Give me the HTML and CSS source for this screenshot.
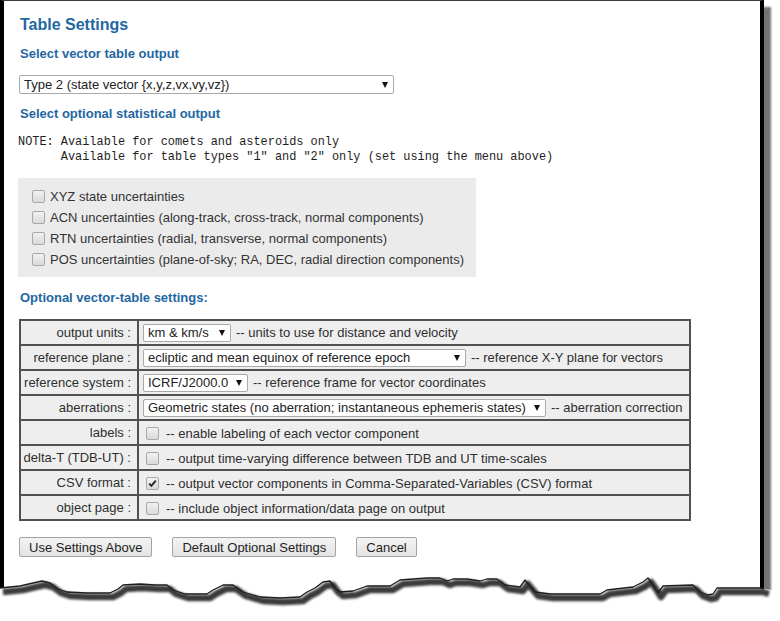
FILE: index.html
```html
<!DOCTYPE html>
<html>
<head>
<meta charset="utf-8">
<title>Table Settings</title>
<link rel="stylesheet" href="styles.css">
</head>
<body>
<div class="page">
  <h1 class="title">Table Settings</h1>
  <h3 class="section">Select vector table output</h3>
  <div class="select select-main"><span class="select-text">Type 2 (state vector {x,y,z,vx,vy,vz})</span><span class="arrow"></span></div>
  <h3 class="section">Select optional statistical output</h3>
  <pre class="note">NOTE: Available for comets and asteroids only
      Available for table types "1" and "2" only (set using the menu above)</pre>
  <div class="stat-box">
    <div class="check-row"><span class="cb"></span><span>XYZ state uncertainties</span></div>
    <div class="check-row"><span class="cb"></span><span>ACN uncertainties (along-track, cross-track, normal components)</span></div>
    <div class="check-row"><span class="cb"></span><span>RTN uncertainties (radial, transverse, normal components)</span></div>
    <div class="check-row"><span class="cb"></span><span>POS uncertainties (plane-of-sky; RA, DEC, radial direction components)</span></div>
  </div>
  <h3 class="section section-gap">Optional vector-table settings:</h3>
  <table class="settings">
    <colgroup><col class="col-lbl"><col class="col-val"></colgroup>
    <tr>
      <td class="lbl">output units :</td>
      <td class="val"><div class="val-inner"><div class="select w-units"><span class="select-text">km &amp; km/s</span><span class="arrow"></span></div><span>-- units to use for distance and velocity</span></div></td>
    </tr>
    <tr>
      <td class="lbl">reference plane :</td>
      <td class="val"><div class="val-inner"><div class="select w-plane"><span class="select-text">ecliptic and mean equinox of reference epoch</span><span class="arrow"></span></div><span>-- reference X-Y plane for vectors</span></div></td>
    </tr>
    <tr>
      <td class="lbl">reference system :</td>
      <td class="val"><div class="val-inner"><div class="select w-system"><span class="select-text">ICRF/J2000.0</span><span class="arrow"></span></div><span>-- reference frame for vector coordinates</span></div></td>
    </tr>
    <tr>
      <td class="lbl">aberrations :</td>
      <td class="val"><div class="val-inner"><div class="select w-aber"><span class="select-text">Geometric states (no aberration; instantaneous ephemeris states)</span><span class="arrow"></span></div><span>-- aberration correction</span></div></td>
    </tr>
    <tr>
      <td class="lbl">labels :</td>
      <td class="val"><div class="val-inner cb-inner"><span class="cb"></span><span>-- enable labeling of each vector component</span></div></td>
    </tr>
    <tr>
      <td class="lbl">delta-T (TDB-UT) :</td>
      <td class="val"><div class="val-inner cb-inner"><span class="cb"></span><span>-- output time-varying difference between TDB and UT time-scales</span></div></td>
    </tr>
    <tr>
      <td class="lbl">CSV format :</td>
      <td class="val"><div class="val-inner cb-inner"><span class="cb"><svg width="11" height="11" viewBox="0 0 11 11"><path d="M2.2 5.6 L4.4 7.9 L8.8 2.6" stroke="#262626" stroke-width="1.9" fill="none"/></svg></span><span>-- output vector components in Comma-Separated-Variables (CSV) format</span></div></td>
    </tr>
    <tr>
      <td class="lbl">object page :</td>
      <td class="val"><div class="val-inner cb-inner"><span class="cb"></span><span>-- include object information/data page on output</span></div></td>
    </tr>
  </table>
  <div class="buttons">
    <button class="btn">Use Settings Above</button>
    <button class="btn">Default Optional Settings</button>
    <button class="btn">Cancel</button>
  </div>
</div>
<svg class="torn" width="780" height="61" viewBox="0 0 780 61">
  <defs>
    <filter id="blur" x="-5%" y="-50%" width="110%" height="200%"><feGaussianBlur stdDeviation="1.3"/></filter>
  </defs>
  <polygon fill="#ffffff" points="0,28 10,27 20,26 33,23 42,21 50,23 58,29 67,32 87,33 110,33 118,29 123,25 140,24 155,25 167,25 173,30 185,34 207,34 213,30 223,25 233,25 243,32 260,37 280,38 300,37 307,32 315,28 323,22 330,21 335,28 340,32 353,31 367,26 390,26 400,20 427,18 440,18 447,21 453,19 467,19 480,21 487,19 497,19 505,25 520,27 525,20 530,26 535,32 550,34 600,34 607,30 633,27 643,22 648,18 653,25 658,33 663,26 693,25 700,32 708,35 713,34 717,28 760,28 772,30 780,30 780,61 0,61"/>
  <polyline filter="url(#blur)" transform="translate(3,4)" fill="none" stroke="#3a3a3a" stroke-width="6.5" stroke-linejoin="round" points="0,28 10,27 20,26 33,23 42,21 50,23 58,29 67,32 87,33 110,33 118,29 123,25 140,24 155,25 167,25 173,30 185,34 207,34 213,30 223,25 233,25 243,32 260,37 280,38 300,37 307,32 315,28 323,22 330,21 335,28 340,32 353,31 367,26 390,26 400,20 427,18 440,18 447,21 453,19 467,19 480,21 487,19 497,19 505,25 520,27 525,20 530,26 535,32 550,34 600,34 607,30 633,27 643,22 648,18 653,25 658,33 663,26 693,25 700,32 708,35 713,34 717,28 760,28 766,30"/>
  <polyline fill="none" stroke="#1e1e1e" stroke-width="1.3" stroke-linejoin="round" points="0,28 10,27 20,26 33,23 42,21 50,23 58,29 67,32 87,33 110,33 118,29 123,25 140,24 155,25 167,25 173,30 185,34 207,34 213,30 223,25 233,25 243,32 260,37 280,38 300,37 307,32 315,28 323,22 330,21 335,28 340,32 353,31 367,26 390,26 400,20 427,18 440,18 447,21 453,19 467,19 480,21 487,19 497,19 505,25 520,27 525,20 530,26 535,32 550,34 600,34 607,30 633,27 643,22 648,18 653,25 658,33 663,26 693,25 700,32 708,35 713,34 717,28 760,28 764,29"/>
</svg>
</body>
</html>
```
FILE: styles.css
```css
* { box-sizing: border-box; }

html, body {
  margin: 0;
  padding: 0;
}

body {
  position: relative;
  width: 780px;
  height: 621px;
  overflow: hidden;
  background: #ffffff;
  font-family: "Liberation Sans", Arial, sans-serif;
  font-size: 13px;
  color: #2e2e2e;
}

.page {
  width: 764px;
  height: 605px;
  background: #ffffff;
  border-left: 4px solid #000000;
  border-right: 4px solid #000000;
  border-top: 1px solid #3a3a3a;
  box-shadow: 7px 7px 2px rgba(0, 0, 0, 0.55);
  padding: 14px 0 0 15px;
  overflow: hidden;
}

.title {
  margin: 0;
  padding-left: 1px;
  font-size: 16px;
  line-height: 20px;
  font-weight: bold;
  color: #1f67a3;
}

.section {
  margin: 12px 0 0;
  padding-left: 1px;
  font-size: 13px;
  line-height: 16px;
  font-weight: bold;
  color: #1f67a3;
}

.title + .section { margin-top: 11px; }

.section-gap { margin-top: 13px; }

.select {
  display: inline-flex;
  align-items: center;
  justify-content: space-between;
  height: 18px;
  padding: 0 5px 0 4px;
  background: #ffffff;
  border: 1px solid #a9a9a9;
  border-radius: 2px;
  color: #222222;
  white-space: nowrap;
  vertical-align: middle;
}

.select-main {
  display: flex;
  width: 375px;
  height: 19px;
  margin-top: 13px;
}

.arrow {
  width: 0;
  height: 0;
  border-left: 3.5px solid transparent;
  border-right: 3.5px solid transparent;
  border-top: 6px solid #111111;
  flex: none;
}

.note {
  margin: 13px 0 0 -1px;
  font-family: "Liberation Mono", "Courier New", monospace;
  font-size: 11.9px;
  line-height: 15px;
  color: #1e1e1e;
}

.stat-box {
  width: 458px;
  margin: 13px 0 0 -1px;
  padding: 8px 0 7px 14px;
  background: #ebebeb;
}

.check-row {
  display: flex;
  align-items: center;
  height: 21px;
  gap: 5px;
  color: #333333;
}

.cb {
  display: inline-flex;
  align-items: center;
  justify-content: center;
  flex: none;
  width: 13px;
  height: 13px;
  border: 1px solid #a8a8a8;
  border-radius: 2px;
  background: linear-gradient(#f1f1f1, #dadada);
}

.settings {
  margin-top: 13px;
  width: 672px;
  table-layout: fixed;
  border-collapse: separate;
  border-spacing: 0;
  border-top: 2px solid #515151;
  border-left: 2px solid #515151;
}

.col-lbl { width: 118px; }

.settings td {
  box-sizing: content-box;
  height: 23px;
  padding: 0;
  background: #eeeeee;
  border-right: 2px solid #515151;
  border-bottom: 2px solid #515151;
  vertical-align: middle;
  white-space: nowrap;
  color: #2e2e2e;
}

.settings td.lbl {
  text-align: right;
  padding-right: 6px;
}

.settings td.val {
  padding-left: 4px;
}

.val-inner {
  display: flex;
  align-items: center;
  gap: 5px;
}

.cb-inner {
  gap: 7px;
  padding-left: 3px;
  padding-top: 2px;
}

.w-units { width: 88px; }
.w-plane { width: 323px; }
.w-system { width: 105px; }
.w-aber { width: 403px; }

.buttons {
  display: flex;
  gap: 20px;
  margin-top: 16px;
}

.btn {
  height: 20px;
  padding: 0 9px;
  font-family: "Liberation Sans", Arial, sans-serif;
  font-size: 13px;
  color: #1e1e1e;
  background: linear-gradient(#f3f3f3, #e3e3e3);
  border: 1px solid #a4a4a4;
  border-radius: 2px;
}

.torn {
  position: absolute;
  left: 0;
  top: 560px;
}
```
